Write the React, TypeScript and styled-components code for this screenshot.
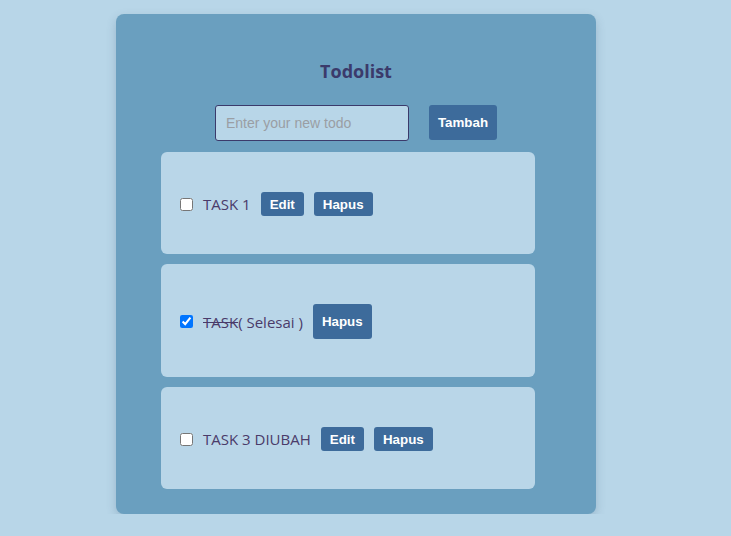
import styled, { createGlobalStyle } from "styled-components";

const GlobalStyle = createGlobalStyle`
  body {
    margin: 0;
    background-color: #b8d6e8;
    font-family: "Open Sans", "Segoe UI", sans-serif;
  }
`;

interface Todo {
  id: number;
  title: string;
  done: boolean;
}

const todos: Todo[] = [
  { id: 1, title: "TASK 1", done: false },
  { id: 2, title: "TASK", done: true },
  { id: 3, title: "TASK 3 DIUBAH", done: false },
];

function App() {
  return (
    <>
      <GlobalStyle />
      <Page>
        <Card>
          <Title>Todolist</Title>
          <Form onSubmit={(e) => e.preventDefault()}>
            <Input type="text" placeholder="Enter your new todo" />
            <Button type="submit" $size="large">
              Tambah
            </Button>
          </Form>
          <List>
            {todos.map((todo) => (
              <Item key={todo.id}>
                <Checkbox type="checkbox" defaultChecked={todo.done} />
                {todo.done ? (
                  <Label>
                    <s>{todo.title}</s>( Selesai )
                  </Label>
                ) : (
                  <Label>{todo.title}</Label>
                )}
                {!todo.done && <Button type="button">Edit</Button>}
                <Button type="button" $size={todo.done ? "large" : "small"}>
                  Hapus
                </Button>
              </Item>
            ))}
          </List>
        </Card>
      </Page>
    </>
  );
}

export default App;

const Page = styled.div`
  display: flex;
  justify-content: center;
  padding: 14px 19px 0 0;
`;

const Card = styled.div`
  width: 480px;
  padding: 45px 0 25px;
  box-sizing: border-box;
  background-color: #6a9fbf;
  border-radius: 8px;
  box-shadow: 0 4px 10px rgba(60, 90, 120, 0.25);
`;

const Title = styled.h1`
  margin: 0;
  text-align: center;
  font-size: 18px;
  line-height: 24px;
  font-weight: 700;
  color: #3b3a6b;
`;

const Form = styled.form`
  display: flex;
  justify-content: center;
  gap: 20px;
  margin-top: 22px;
`;

const Input = styled.input`
  width: 194px;
  height: 36px;
  box-sizing: border-box;
  padding: 0 10px;
  background-color: #b8d6e8;
  border: 1px solid #3b3a6b;
  border-radius: 3px;
  font-family: "Liberation Sans", Arial, sans-serif;
  font-size: 14px;
  color: #333;

  &::placeholder {
    color: #9a9ea4;
  }
`;

const Button = styled.button<{ $size?: "small" | "large" }>`
  height: ${({ $size }) => ($size === "large" ? "35px" : "24px")};
  padding: 0 9px;
  background-color: #3d6b9b;
  color: #fff;
  border: none;
  border-radius: 3px;
  font-family: "Liberation Sans", Arial, sans-serif;
  font-size: 13.33px;
  font-weight: 700;
  cursor: pointer;
`;

const List = styled.ul`
  display: flex;
  flex-direction: column;
  gap: 10px;
  margin: 11px 0 0 45px;
  padding: 0;
  list-style: none;
`;

const Item = styled.li`
  display: flex;
  align-items: center;
  gap: 10px;
  width: 374px;
  box-sizing: border-box;
  padding: 40px 19px 38px;
  background-color: #b9d6e8;
  border-radius: 6px;
`;

const Checkbox = styled.input`
  width: 13px;
  height: 13px;
  margin: 0;
`;

const Label = styled.span`
  font-size: 15px;
  color: #4a3b6a;
`;
